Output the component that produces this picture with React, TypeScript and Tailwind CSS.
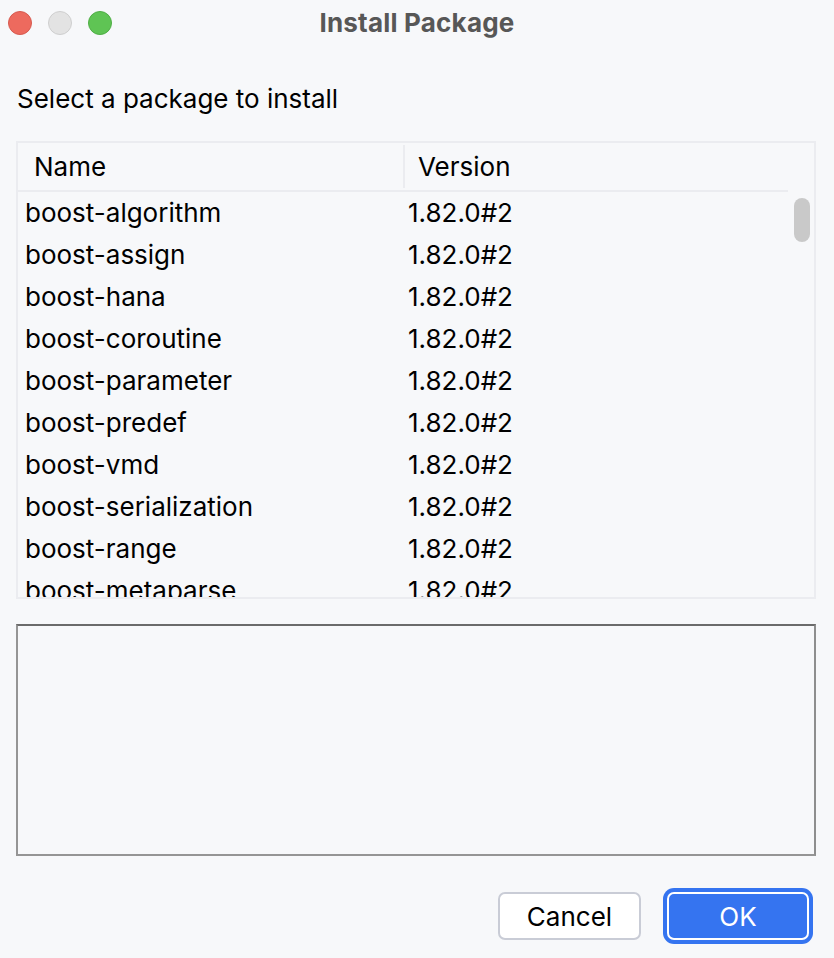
import React from "react";

const rows = [
  "boost-algorithm",
  "boost-assign",
  "boost-hana",
  "boost-coroutine",
  "boost-parameter",
  "boost-predef",
  "boost-vmd",
  "boost-serialization",
  "boost-range",
  "boost-metaparse",
];

export default function App() {
  return (
    <div
      className="w-[834px] h-[958px] bg-[#f7f8fa] flex flex-col text-[#000000] overflow-hidden"
      style={{ fontFamily: "Inter, 'Noto Sans', sans-serif" }}
    >
      {/* Title bar */}
      <div className="h-[46px] grid grid-cols-[1fr_auto_1fr] items-center">
        <div className="flex items-center gap-[16px] pl-[8px]">
          <div className="w-[24px] h-[24px] rounded-full bg-[#ed6a5e] border border-[#d75a4f]" />
          <div className="w-[24px] h-[24px] rounded-full bg-[#e3e3e3] border border-[#cfcfcf]" />
          <div className="w-[24px] h-[24px] rounded-full bg-[#5fc454] border border-[#4fae45]" />
        </div>
        <div className="text-[26px] font-bold text-[#575757] leading-[32px] tracking-[0.2px]">Install Package</div>
        <div />
      </div>

      <div className="mt-[37px] pl-[17px] text-[26px] leading-[32px] text-[#000000]">
        Select a package to install
      </div>

      {/* Table */}
      <div className="mt-[26px] ml-[16px] mr-[18px] h-[458px] border-2 border-[#ebecf0] flex overflow-hidden">
        <div className="flex-1 flex flex-col min-w-0">
          <div className="h-[49px] flex items-stretch border-b-2 border-[#ebecf0] shrink-0">
            <div className="w-[385px] flex items-center pl-[16px] text-[26px]">Name</div>
            <div className="w-[2px] bg-[#ebecf0] my-[2px]" />
            <div className="flex items-center pl-[13px] text-[26px]">Version</div>
          </div>
          <div className="flex flex-col">
            {rows.map((r) => (
              <div key={r} className="h-[42px] flex items-center text-[26px] leading-[32px] shrink-0">
                <div className="w-[385px] pl-[7px] whitespace-nowrap">{r}</div>
                <div className="pl-[5px]">1.82.0#2</div>
              </div>
            ))}
          </div>
        </div>
        <div className="w-[26px] shrink-0 pt-[55px] pl-[6px]">
          <div className="w-[16px] h-[44px] rounded-full bg-[#c9c9c9]" />
        </div>
      </div>

      {/* Description area */}
      <div className="mt-[25px] ml-[16px] mr-[18px] h-[232px] border-2 border-t-[#6b6b6b] border-l-[#959595] border-r-[#8e8e8e] border-b-[#959595] bg-[#f7f8fa]" />

      {/* Buttons */}
      <div className="mt-[36px] flex justify-end gap-[26px] pr-[25px]">
        <button className="w-[143px] h-[48px] rounded-[7px] border-2 border-[#c9ccd6] bg-white text-[26px] text-black">
          Cancel
        </button>
        <button className="w-[142px] h-[48px] rounded-[7px] border-2 border-white bg-[#3574f0] text-[26px] text-white shadow-[0_0_0_4px_#3574f0]">
          OK
        </button>
      </div>
    </div>
  );
}
